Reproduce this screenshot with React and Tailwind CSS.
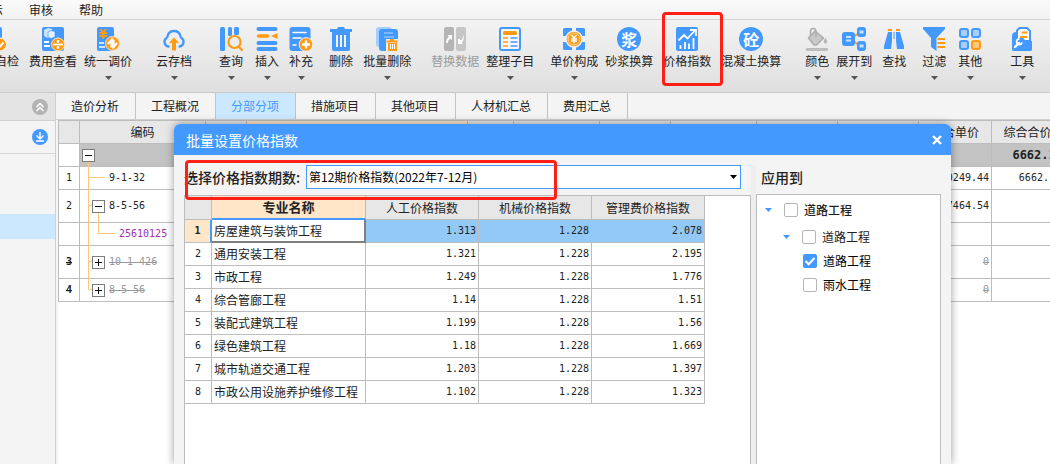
import { useState } from "react";

const BLUE = "#4499ff";
const ORANGE = "#ff9a14";

function Svg({ children }) {
  return (
    <svg width="24" height="24" viewBox="0 0 24 24" fill="none" aria-hidden="true">
      {children}
    </svg>
  );
}

function CheckSheetIcon() {
  return (
    <Svg>
      <rect x="1" y="0" width="18" height="24" rx="2" fill={BLUE} />
      <path d="M4 5h12M4 10h9M4 15h4" stroke="#fff" strokeWidth="2" />
      <circle cx="17" cy="17.500" r="6.500" fill={ORANGE} stroke="#fff" />
      <path d="M14 17.500l2.500 2.500 4-4.500" stroke="#fff" strokeWidth="2" />
    </Svg>
  );
}

function CostIcon() {
  return (
    <Svg>
      <rect x="1" y="0" width="22" height="24" rx="2" fill={BLUE} />
      <path d="M3 3l4-2 4 1v8l-4 1-4-2z" fill="#cfe4ff" />
      <path d="M7 5l3-1.500 4 1V10l-4 1.500L7 10z" fill="#e6f1ff" stroke={BLUE} strokeWidth="0.700" />
      <path d="M3 15h5M3 19h6" stroke="#fff" strokeWidth="1.800" />
      <circle cx="17" cy="17.500" r="6.500" fill={ORANGE} stroke="#ffe3c0" />
      <path d="M12 17.500h10" stroke="#fff" strokeWidth="1.800" />
      <circle cx="17" cy="14.500" r="1.400" fill="#fff" />
      <circle cx="17" cy="20.500" r="1.400" fill="#fff" />
    </Svg>
  );
}

function AdjustIcon() {
  return (
    <Svg>
      <rect x="1" y="0" width="17" height="24" rx="2" fill={BLUE} />
      <path d="M4.500 2l2.700 3.500L10 2M3.500 6h7.500M3.500 9h7.500M7.200 5.500V12" stroke={ORANGE} strokeWidth="1.900" />
      <path d="M3 16h5M3 20h6" stroke="#fff" strokeWidth="1.500" />
      <circle cx="16.500" cy="16.500" r="7" fill={ORANGE} stroke="#ffe3c0" />
      <path d="M12 17l3.500-4v7.500M21 16l-3.500 4v-7.500" stroke="#fff" strokeWidth="2.200" />
    </Svg>
  );
}

function CloudIcon() {
  return (
    <Svg>
      <path
        d="M6.500 19.500A4.700 4.700 0 0 1 4.500 11c.8-.4 1-1 1.100-2A6.600 6.600 0 0 1 18.400 9c.1 1 .3 1.600 1.100 2a4.700 4.700 0 0 1-2 8.500"
        stroke={BLUE}
        strokeWidth="2.300"
        strokeLinecap="round"
      />
      <path d="M12 10.500l5 5.500h-3v7.500h-4V16H7z" fill={ORANGE} />
    </Svg>
  );
}

function QueryIcon() {
  return (
    <Svg>
      <rect x="1" y="0" width="5" height="24" rx="1.500" fill={BLUE} />
      <rect x="9" y="0" width="4" height="9" rx="1.500" fill={BLUE} />
      <rect x="15" y="0" width="5" height="8" rx="1.500" fill={BLUE} />
      <circle cx="15.500" cy="15" r="6" stroke={ORANGE} strokeWidth="2.200" />
      <path d="M19.500 19.500l3.500 3.500" stroke={ORANGE} strokeWidth="2.400" strokeLinecap="round" />
    </Svg>
  );
}

function InsertIcon() {
  return (
    <Svg>
      <path d="M3.500 2h17M3.500 16h17M3.500 22h17" stroke={BLUE} strokeWidth="4" strokeLinecap="round" />
      <path d="M3.500 9h9" stroke={ORANGE} strokeWidth="3.500" strokeLinecap="round" />
      <path d="M22.500 6v6L16 9z" fill={ORANGE} />
    </Svg>
  );
}

function AddIcon() {
  return (
    <Svg>
      <rect x="0.500" y="0" width="21" height="24" rx="3" fill={BLUE} />
      <path d="M4 5.500h13M4 11h8M4 18h3" stroke="#fff" strokeWidth="1.600" strokeLinecap="round" />
      <circle cx="17" cy="17.500" r="6.800" fill={ORANGE} stroke="#f3f3f3" />
      <path d="M13 17.500h8M17 13.500v8" stroke="#fff" strokeWidth="2.400" />
    </Svg>
  );
}

function TrashIcon() {
  return (
    <Svg>
      <path d="M1 2h7l1-2h6l1 2h7v3H1z" fill={BLUE} />
      <path d="M3 5h18v17a2 2 0 0 1-2 2H5a2 2 0 0 1-2-2z" fill={BLUE} />
      <path d="M8 8v12M12 8v12M16 8v12" stroke="#f4f4f4" strokeWidth="2" />
    </Svg>
  );
}

function BatchTrashIcon() {
  return (
    <Svg>
      <rect x="1" y="0" width="16" height="20" rx="3" fill="#a3cdff" />
      <rect x="4" y="2" width="19" height="22" rx="3" fill={BLUE} />
      <path d="M9 6h9M9 10h10" stroke="#7ab7ff" strokeWidth="1.800" />
      <path d="M11 12h13v12H11z" fill="#ededed" />
      <path d="M11.500 13.500h3l1-1.500h3l1 1.500h3v2h-11zM13 16h9v8h-9z" fill={ORANGE} />
      <path d="M15.500 17v5M17.500 17v5M19.500 17v5" stroke="#fff" />
    </Svg>
  );
}

function ReplaceIcon() {
  return (
    <Svg>
      <rect x="1" y="0" width="10" height="24" rx="2" fill="#b5b5b5" />
      <rect x="13" y="0" width="10" height="24" rx="2" fill="#c6c6c6" />
      <path d="M3 16c0-3 1-5 3-6L4.500 8H9v5L7.500 11.500C5.500 13 5 14 5 16zM20 8c0 3-.5 5-2 5.500L16.500 12H15v5h5l-1.500-1.500C20.500 14 21.500 11 20 8z" fill="#fff" />
    </Svg>
  );
}

function ArrangeIcon() {
  return (
    <Svg>
      <rect x="2" y="1" width="20" height="22" rx="2" fill="#f6f6f6" stroke={BLUE} strokeWidth="2" />
      <rect x="5" y="4" width="14" height="4" rx="1.500" fill={ORANGE} />
      <path d="M5 11h5M5 15h5M5 19h5" stroke={ORANGE} strokeWidth="1.700" />
      <path d="M12.500 11h7M12.500 15h7M12.500 19h7" stroke={BLUE} strokeWidth="1.700" />
    </Svg>
  );
}

function PriceIcon() {
  return (
    <Svg>
      <path d="M2 1h8v8H1V2zM14 1h8l1 1v7h-9zM1 15h9v8H2l-1-1zM14 15h9v7l-1 1h-8z" fill={BLUE} />
      <circle cx="12" cy="12" r="8" fill={ORANGE} stroke="#f0f0f0" strokeWidth="1.500" />
      <circle cx="12" cy="12" r="6" stroke="#ffe0b8" strokeWidth="0.800" />
      <path d="M9.500 8l2.500 3 2.500-3M9 12h6M9 14h6M12 11v5.500" stroke="#fff" strokeWidth="1.400" />
    </Svg>
  );
}

function IndexIcon() {
  return (
    <Svg>
      <rect x="1" y="0" width="22" height="24" rx="2" fill={BLUE} />
      <path d="M3.500 13.500L9 8l3.500 3.500L19.500 4" stroke="#fff" strokeWidth="1.800" />
      <path d="M15 3h6v6" stroke="#fff" strokeWidth="1.800" />
      <path d="M5.500 18v4M10 15v7M14 16.500V22M18.500 11v11" stroke="#fff" strokeWidth="1.800" />
    </Svg>
  );
}

function PaintIcon() {
  return (
    <Svg>
      <path d="M3.500 11l6.500-7 8.500 7-7 7H9z" fill="#c8c8c8" stroke="#adadad" strokeWidth="1.600" strokeLinejoin="round" />
      <path d="M5.500 9V4.500c0-4 5.500-4 5.500 0V10" stroke="#adadad" strokeWidth="1.600" />
      <path d="M20.500 11c2.500 3 2 5.500 0 5.500s-2.500-2.500 0-5.500z" fill="#b5b5b5" />
      <rect x="1" y="21" width="22" height="3" rx="1" fill="#bdbdbd" />
    </Svg>
  );
}

function ExpandIcon() {
  return (
    <Svg>
      <path d="M11 10l6-4M11 14l6 4" stroke={ORANGE} strokeWidth="2" />
      <rect x="0" y="5" width="13" height="14" rx="3" fill={BLUE} />
      <rect x="15" y="0" width="9" height="10" rx="3" fill={BLUE} />
      <rect x="15" y="14" width="9" height="10" rx="3" fill={BLUE} />
      <path d="M4 10h5M4 13.500h5" stroke="#c8e1ff" strokeWidth="1.800" />
      <rect x="17.500" y="3.500" width="4" height="3" fill="#c8e1ff" />
      <rect x="17.500" y="17.500" width="4" height="3" fill="#c8e1ff" />
    </Svg>
  );
}

function FindIcon() {
  return (
    <Svg>
      <path d="M6 2h4v2H6zM14 2h4v2h-4z" fill={ORANGE} />
      <path d="M6 5h4v9l-1 8H2v-3zM14 5h4l4 14v3h-7l-1-8z" fill={BLUE} />
      <path d="M12 5v7" stroke={BLUE} />
    </Svg>
  );
}

function FilterIcon() {
  return (
    <Svg>
      <path d="M1 0h22v2l-8.500 9v13L9 20v-9L1 2z" fill={BLUE} />
      <path d="M15.500 12H23M15.500 16H23M15.500 20H23" stroke={ORANGE} strokeWidth="2" />
    </Svg>
  );
}

function OtherIcon() {
  return (
    <Svg>
      <rect x="2" y="2" width="8" height="8" rx="2" fill="#a8d0ff" stroke={BLUE} strokeWidth="2" />
      <rect x="14" y="2" width="8" height="8" rx="2" fill="#a8d0ff" stroke={BLUE} strokeWidth="2" />
      <rect x="2" y="14" width="8" height="8" rx="2" fill="#a8d0ff" stroke={BLUE} strokeWidth="2" />
      <rect x="14" y="14" width="8" height="8" rx="2" fill="#ffc680" stroke={ORANGE} strokeWidth="2" />
    </Svg>
  );
}

function ToolIcon() {
  return (
    <Svg>
      <path d="M9.500 1H17l3 3v10H7V3.500z" fill="#fff" stroke={BLUE} strokeWidth="2" strokeLinejoin="round" />
      <path d="M11.500 5.500h6M10 10h7.500" stroke={ORANGE} strokeWidth="1.800" />
      <path d="M2 8.500A4 4 0 0 1 6 5l2 6h5l3 3h6v8.500a1.500 1.500 0 0 1-1.500 1.500h-17A1.500 1.500 0 0 1 2 22.500z" fill={BLUE} />
      <path d="M5 20l4-4" stroke="#fff" strokeWidth="2.400" strokeLinecap="round" />
      <path d="M9.500 12a2.700 2.700 0 1 0 2.500 3.500" stroke="#fff" strokeWidth="2" />
    </Svg>
  );
}

function GlyphIcon({ char }) {
  return (
    <span className="flex h-6 w-6 items-center justify-center rounded-full bg-[#4499ff] text-base leading-6 font-bold text-white">
      {char}
    </span>
  );
}

const TOOLS = [
  { label: "项目自检", icon: <CheckSheetIcon />, space: "-ml-[29px]" },
  { label: "费用查看", icon: <CostIcon />, space: "ml-2.5" },
  { label: "统一调价", icon: <AdjustIcon />, space: "ml-[7px]", menu: true },
  { label: "云存档", icon: <CloudIcon />, space: "ml-6", menu: true },
  { label: "查询", icon: <QueryIcon />, space: "ml-[27px]", menu: true },
  { label: "插入", icon: <InsertIcon />, space: "ml-3", menu: true },
  { label: "补充", icon: <AddIcon />, space: "ml-2.5", menu: true },
  { label: "删除", icon: <TrashIcon />, space: "ml-4" },
  { label: "批量删除", icon: <BatchTrashIcon />, space: "ml-2.5", menu: true },
  { label: "替换数据", icon: <ReplaceIcon />, space: "ml-5", disabled: true },
  { label: "整理子目", icon: <ArrangeIcon />, space: "ml-[7px]", menu: true },
  { label: "单价构成", icon: <PriceIcon />, space: "ml-4", menu: true },
  { label: "砂浆换算", icon: <GlyphIcon char="浆" />, space: "ml-[7px]" },
  { label: "价格指数", icon: <IndexIcon />, space: "ml-2.5" },
  { label: "混凝土换算", icon: <GlyphIcon char="砼" />, space: "ml-2.5" },
  { label: "颜色", icon: <PaintIcon />, space: "ml-6", menu: true },
  { label: "展开到", icon: <ExpandIcon />, space: "ml-[7px]", menu: true },
  { label: "查找", icon: <FindIcon />, space: "ml-2.5" },
  { label: "过滤", icon: <FilterIcon />, space: "ml-4", menu: true },
  { label: "其他", icon: <OtherIcon />, space: "ml-3", menu: true },
  { label: "工具", icon: <ToolIcon />, space: "ml-7", menu: true },
];

const TABS = ["造价分析", "工程概况", "分部分项", "措施项目", "其他项目", "人材机汇总", "费用汇总"];

const PRICE_ROWS = [
  ["房屋建筑与装饰工程", "1.313", "1.228", "2.078"],
  ["通用安装工程", "1.321", "1.228", "2.195"],
  ["市政工程", "1.249", "1.228", "1.776"],
  ["综合管廊工程", "1.14", "1.228", "1.51"],
  ["装配式建筑工程", "1.199", "1.228", "1.56"],
  ["绿色建筑工程", "1.18", "1.228", "1.669"],
  ["城市轨道交通工程", "1.203", "1.228", "1.397"],
  ["市政公用设施养护维修工程", "1.102", "1.228", "1.323"],
];

// lines: branch path drawn behind the code cell, starting at the cell's left edge
const ITEMS = [
  { no: "", code: "", toggle: "minus", pad: "pl-0.5", height: "h-[23px]", lines: "M8.500 17V23", total: "6662.16", sum: true },
  { no: "1", code: "9-1-32", pad: "pl-[29px]", height: "h-[23px]", lines: "M8.500 0V23M8.500 10.500H25", unit: "10249.44", total: "6662.16" },
  { no: "2", code: "8-5-56", toggle: "minus", pad: "pl-3", height: "h-[33px]", lines: "M8.500 0V33M8.500 15.500H12M18.500 22V33", unit: "7464.54" },
  { no: "", code: "25610125", pad: "pl-[39px]", height: "h-[23px]", lines: "M8.500 0V23M18.500 0V10.500H35", color: "text-[#a030b0]" },
  { no: "3", code: "10-1-426", toggle: "plus", pad: "pl-3", height: "h-[33px]", lines: "M8.500 0V33M8.500 15.500H12", unit: "0", struck: true },
  { no: "4", code: "8-5-56", toggle: "plus", pad: "pl-3", height: "h-[23px]", lines: "M8.500 0V10.500H12", unit: "0", struck: true },
];

function Caret({ className }) {
  return (
    <svg width="7" height="4" viewBox="0 0 7 4" className={className} aria-hidden="true">
      <path d="M0 0h7L3.500 4z" fill="currentColor" />
    </svg>
  );
}

function MenuBar() {
  return (
    <nav className="flex h-5 items-center gap-[26px] overflow-hidden border-b border-[#d3d3d3] bg-linear-to-b from-[#fafafa] to-[#f2f2f2]">
      <button className="-ml-[21px] shrink-0">显示</button>
      <button>审核</button>
      <button>帮助</button>
    </nav>
  );
}

function Toolbar() {
  return (
    <div className="flex h-[73px] shrink-0 items-start overflow-hidden border-b border-[#c9c9c9] bg-linear-to-b from-[#f3f3f3] to-[#dfdfdf] pt-[7px]">
      {TOOLS.map((tool) => (
        <button
          key={tool.label}
          disabled={tool.disabled}
          className={`flex shrink-0 flex-col items-center whitespace-nowrap disabled:text-[#9b9b9b] ${tool.space}`}
        >
          {tool.icon}
          <span className="mt-0.5 leading-4">{tool.label}</span>
          {tool.menu && <Caret className="mt-[7px] text-[#555]" />}
        </button>
      ))}
    </div>
  );
}

function Sidebar() {
  return (
    <aside className="flex w-14 shrink-0 flex-col border-r border-[#cfcfcf] bg-[#f4f4f4]">
      <div className="flex h-7 items-center justify-end border-b border-[#cfcfcf] bg-[#e4e4e4] pr-[7px]">
        <button aria-label="收起" className="flex h-4 w-4 items-center justify-center rounded-full bg-[#b3b3b3]">
          <svg width="10" height="10" viewBox="0 0 10 10" fill="none" stroke="#fff" strokeWidth="1.500">
            <path d="M1.500 5L5 1.500 8.500 5M1.500 9L5 5.500 8.500 9" />
          </svg>
        </button>
      </div>
      <div className="flex h-[33px] items-center justify-end border-b border-[#d6d6d6] pr-[7px]">
        <button aria-label="下载" className="flex h-4 w-4 items-center justify-center rounded-full bg-[#4499ff]">
          <svg width="10" height="10" viewBox="0 0 10 10" fill="none" stroke="#fff" strokeWidth="1.400">
            <path d="M5 0v7M1.500 3.500L5 7l3.500-3.500M1 9h8" />
          </svg>
        </button>
      </div>
      <div className="mt-[60px] h-[25px] bg-[#cce8ff]" />
    </aside>
  );
}

function Tabs() {
  const [active, setActive] = useState("分部分项");

  return (
    <div className="flex h-[27px] shrink-0 border-b border-[#cfcfcf] bg-[#f4f4f4]">
      {TABS.map((tab) => (
        <button
          key={tab}
          onClick={() => setActive(tab)}
          className={`border-r border-[#c3c3c3] pr-4 pl-[15px] ${
            active === tab ? "bg-[#cce8ff] text-[#4499ff]" : ""
          }`}
        >
          {tab}
        </button>
      ))}
    </div>
  );
}

function TreeToggle({ type }) {
  return (
    <button
      aria-label={type === "plus" ? "展开" : "折叠"}
      className="relative h-[13px] w-[13px] shrink-0 border border-[#7c7c7c] bg-white"
    >
      <svg width="11" height="11" viewBox="0 0 11 11" stroke="#111">
        <path d={type === "plus" ? "M2 5.500h7M5.500 2v7" : "M2 5.500h7"} />
      </svg>
    </button>
  );
}

function ItemGrid() {
  const cell = "border-r border-b border-[#bdbdbd] p-0";

  return (
    <div className="ml-0.5 flex-1 overflow-hidden bg-white">
      <table className="w-[1006px] table-fixed border-separate border-spacing-0 border-l border-[#bdbdbd]">
        <colgroup>
          <col className="w-[21px]" />
          <col className="w-[126px]" />
          <col className="w-[41px]" />
          <col className="w-[221px]" />
          <col className="w-[46px]" />
          <col className="w-[86px]" />
          <col className="w-[71px]" />
          <col className="w-[86px]" />
          <col className="w-[81px]" />
          <col className="w-[81px]" />
          <col className="w-[73px]" />
          <col className="w-[72px]" />
        </colgroup>
        <thead>
          <tr className="h-6 bg-[#e7e7e7]">
            <th className={`${cell} border-t`} />
            <th className={`${cell} border-t font-normal`}>编码</th>
            <th className={`${cell} border-t`} />
            <th className={`${cell} border-t bg-[#ffe6c8]`} />
            {[0, 1, 2, 3, 4, 5].map((i) => (
              <th key={i} className={`${cell} border-t`} />
            ))}
            <th className={`${cell} border-t font-normal`}>综合单价</th>
            <th className={`${cell} border-t font-normal`}>综合合价</th>
          </tr>
        </thead>
        <tbody>
          {ITEMS.map((item, index) => (
            <tr key={index} className={`${item.height} ${item.sum ? "bg-[#c3c3c3]" : "bg-white"}`}>
              <td
                className={`${cell} bg-white text-center font-['DejaVu_Sans_Mono',monospace] text-[10px] leading-4 ${
                  item.struck ? "font-bold line-through" : ""
                }`}
              >
                {item.no}
              </td>
              <td className={cell}>
                <div className={`relative -mb-px flex items-center gap-1 pb-px ${item.height} ${item.pad}`}>
                  <svg width="40" height="33" className="absolute top-0 left-0" fill="none" stroke="#ffc57a" aria-hidden="true">
                    <path d={item.lines} />
                  </svg>
                  {item.toggle && <TreeToggle type={item.toggle} />}
                  <span
                    className={`font-['DejaVu_Sans_Mono',monospace] text-[10px] leading-4 ${item.color || ""} ${
                      item.struck ? "text-[#999] line-through" : ""
                    }`}
                  >
                    {item.code}
                  </span>
                </div>
              </td>
              {[0, 1, 2, 3, 4, 5, 6, 7].map((i) => (
                <td key={i} className={cell} />
              ))}
              <td
                className={`${cell} pr-0.5 text-right font-['DejaVu_Sans_Mono',monospace] text-[10px] leading-4 ${
                  item.struck ? "text-[#999] line-through" : ""
                }`}
              >
                {item.unit}
              </td>
              <td
                className={`${cell} text-right font-['DejaVu_Sans_Mono',monospace] leading-4 ${
                  item.sum ? "text-xs font-bold" : "pr-0.5 text-[10px]"
                }`}
              >
                {item.total}
              </td>
            </tr>
          ))}
        </tbody>
      </table>
    </div>
  );
}

function PriceTable() {
  const cell = "border-[#bdbdbd] px-0.5 py-0";

  return (
    <table className="w-[520px] table-fixed border-separate border-spacing-0">
      <colgroup>
        <col className="w-[27px]" />
        <col className="w-[154px]" />
        <col className="w-[113px]" />
        <col className="w-[113px]" />
        <col className="w-[113px]" />
      </colgroup>
      <thead>
        <tr className="h-6 bg-[#e7e7e7]">
          <th className={`${cell} border-r border-b`} />
          <th className={`${cell} border-r border-b-2 border-b-[#4499ff] bg-[#ffe6c8] text-[13px] leading-4`}>
            专业名称
          </th>
          <th className={`${cell} border-r border-b font-normal`}>人工价格指数</th>
          <th className={`${cell} border-r border-b font-normal`}>机械价格指数</th>
          <th className={`${cell} border-r border-b font-normal`}>管理费价格指数</th>
        </tr>
      </thead>
      <tbody>
        {PRICE_ROWS.map(([name, ...values], index) => {
          const selected = index === 0;
          return (
            <tr key={name} className="h-[23px]">
              <th
                scope="row"
                className={`${cell} border-b font-['DejaVu_Sans_Mono',monospace] text-[10px] leading-4 ${
                  selected
                    ? "border-r-2 border-r-[#4499ff] bg-[#ffe6c8] font-bold"
                    : "border-r font-normal"
                }`}
              >
                {index + 1}
              </th>
              <td
                className={`py-0 pl-0.5 whitespace-nowrap ${
                  selected
                    ? "border-r-2 border-b-2 border-[#808080]"
                    : "border-r border-b border-[#bdbdbd]"
                }`}
              >
                {name}
              </td>
              {values.map((value, i) => (
                <td
                  key={i}
                  className={`${cell} border-r border-b text-right font-['DejaVu_Sans_Mono',monospace] text-[10px] leading-4 ${
                    selected ? "bg-[#92c9f7]" : ""
                  }`}
                >
                  {value}
                </td>
              ))}
            </tr>
          );
        })}
      </tbody>
    </table>
  );
}

function CheckItem({ label, defaultChecked, bold }) {
  return (
    <label className={`flex items-center gap-1.5 ${bold ? "font-medium" : ""}`}>
      <span className="relative flex">
        <input
          type="checkbox"
          defaultChecked={defaultChecked}
          className="peer h-3.5 w-3.5 appearance-none rounded-xs border border-[#b5b5b5] bg-white checked:border-[#4499ff] checked:bg-[#4499ff]"
        />
        <svg
          width="14"
          height="14"
          viewBox="0 0 14 14"
          fill="none"
          stroke="#fff"
          strokeWidth="2"
          className="pointer-events-none absolute inset-0 hidden peer-checked:block"
        >
          <path d="M2.500 7l3.200 3.200L11.500 4" />
        </svg>
      </span>
      {label}
    </label>
  );
}

function PriceIndexDialog() {
  return (
    <section
      role="dialog"
      aria-label="批量设置价格指数"
      className="absolute top-[124px] right-[99px] bottom-0 left-[174px] flex flex-col rounded-t-md bg-[#f4f4f4] shadow-[0_0_8px_rgba(0,0,0,0.4)]"
    >
      <header className="flex h-[31px] shrink-0 items-center justify-between rounded-t-md bg-[#4499ff] pr-2 pl-3 text-sm text-white">
        <h2>批量设置价格指数</h2>
        <button aria-label="关闭">
          <svg width="12" height="12" viewBox="0 0 12 12" stroke="#fff" strokeWidth="2.400">
            <path d="M2 2l8 8M10 2l-8 8" />
          </svg>
        </button>
      </header>

      <div className="flex min-h-0 flex-1 px-2.5 pt-2.5">
        <div className="flex min-w-0 flex-1 flex-col gap-1.5">
          <div className="relative mr-2.5 flex h-6 items-center">
            <label htmlFor="period" className="w-[122px] shrink-0 text-sm font-medium whitespace-nowrap">
              选择价格指数期数:
            </label>
            <select
              id="period"
              className="h-6 min-w-0 flex-1 appearance-none border border-[#4499ff] bg-white pl-0.5 text-black"
            >
              <option>第12期价格指数(2022年7-12月)</option>
            </select>
            <Caret className="pointer-events-none absolute top-2.5 right-1 text-black" />
          </div>
          <div className="min-h-0 flex-1 overflow-hidden border-t border-r border-l border-[#bdbdbd] bg-white">
            <PriceTable />
          </div>
        </div>

        <div className="w-[5px] shrink-0 bg-[#eeeeee]" />

        <div className="flex w-[185px] shrink-0 flex-col gap-[5px]">
          <h3 className="h-6 pl-[5px] text-sm leading-6 font-medium">应用到</h3>
          <ul className="min-h-0 flex-1 border-t border-r border-l border-[#bdbdbd] bg-white">
            <li className="flex h-[30px] items-center gap-3 pl-2">
              <Caret className="text-[#4499ff]" />
              <CheckItem label="道路工程" bold />
            </li>
            <li className="flex h-6 items-center gap-3 pl-[26px]">
              <Caret className="text-[#4499ff]" />
              <CheckItem label="道路工程" />
            </li>
            <li className="flex h-6 items-center pl-[46px] text-black">
              <CheckItem label="道路工程" defaultChecked />
            </li>
            <li className="flex h-6 items-center pl-[46px] text-black">
              <CheckItem label="雨水工程" />
            </li>
          </ul>
        </div>
      </div>
    </section>
  );
}

export default function App() {
  return (
    <div className="relative flex h-screen flex-col overflow-hidden bg-[#f4f4f4] font-['Noto_Sans_CJK_SC',sans-serif] text-xs text-[#222]">
      <MenuBar />
      <Toolbar />

      <div className="flex min-h-0 flex-1">
        <Sidebar />
        <div className="flex min-w-0 flex-1 flex-col">
          <Tabs />
          <ItemGrid />
        </div>
      </div>

      <PriceIndexDialog />

      {/* red callouts */}
      <div className="pointer-events-none absolute top-3 left-[662px] h-[74px] w-[61px] rounded-sm border-3 border-[#ff2015]" />
      <div className="pointer-events-none absolute top-40 left-[185px] h-10 w-[372px] rounded-sm border-3 border-[#ff2015]" />
    </div>
  );
}
